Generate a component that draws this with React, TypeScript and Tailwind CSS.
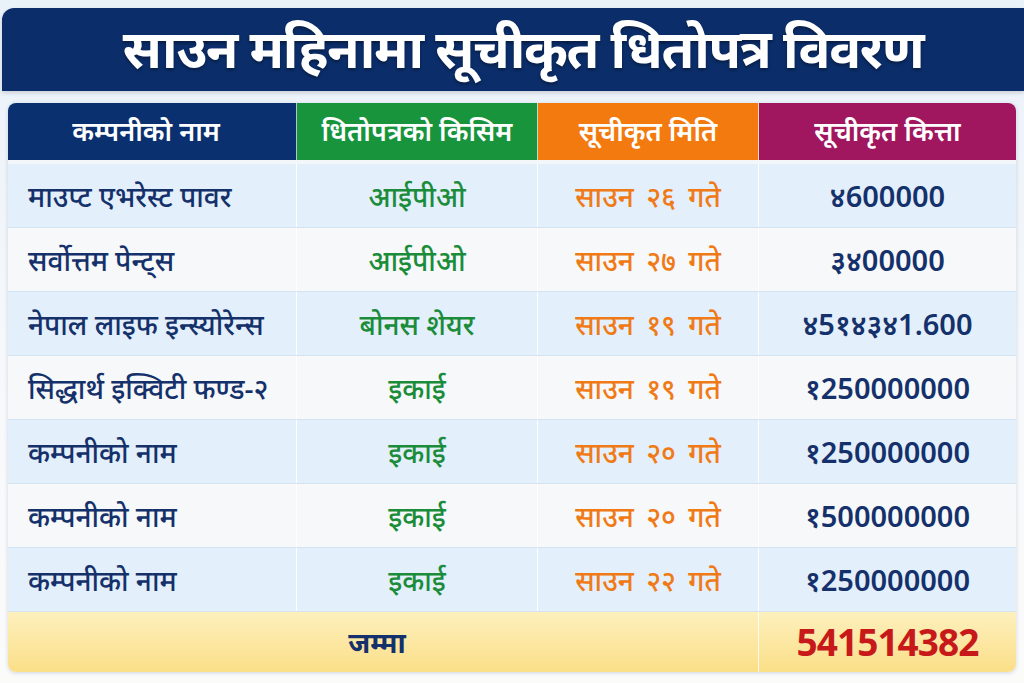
import React from 'react';

type Row = { name: string; kind: string; date: string; qty: string };

const rows: Row[] = [
  { name: 'माउप्ट एभरेस्ट पावर', kind: 'आईपीओ', date: 'साउन २६ गते', qty: '४600000' },
  { name: 'सर्वोत्तम पेन्ट्स', kind: 'आईपीओ', date: 'साउन २७ गते', qty: '३४00000' },
  { name: 'नेपाल लाइफ इन्स्योरेन्स', kind: 'बोनस शेयर', date: 'साउन १९ गते', qty: '४5१४३४1.600' },
  { name: 'सिद्धार्थ इक्विटी फण्ड-२', kind: 'इकाई', date: 'साउन १९ गते', qty: '१250000000' },
  { name: 'कम्पनीको नाम', kind: 'इकाई', date: 'साउन २० गते', qty: '१250000000' },
  { name: 'कम्पनीको नाम', kind: 'इकाई', date: 'साउन २० गते', qty: '१500000000' },
  { name: 'कम्पनीको नाम', kind: 'इकाई', date: 'साउन २२ गते', qty: '१250000000' },
];

const cols = 'grid grid-cols-[289px_241px_221px_257px]';

export default function App() {
  return (
    <div
      className="w-[1024px] h-[683px] overflow-hidden bg-gradient-to-b from-[#e9f1f9] via-[#f6f8fb] to-[#fbfbfa] flex flex-col"
      style={{ fontFamily: "'Noto Sans', 'Lohit Devanagari', 'FreeSans', sans-serif" }}
    >
      {/* शीर्षक */}
      <div className="mt-2 ml-[2px] h-[83px] rounded-tl-xl bg-[#0b2d69] flex items-center justify-center pb-1 pl-5 shadow-[0_2px_4px_rgba(0,0,0,0.15)]">
        <h1 className="text-white font-bold text-[53px] leading-none tracking-tight [text-shadow:0_2px_3px_rgba(0,0,0,0.35)]">
          साउन महिनामा सूचीकृत धितोपत्र विवरण
        </h1>
      </div>

      {/* तालिका */}
      <div className="mt-3 ml-2 w-[1008px] rounded-lg overflow-hidden shadow-[0_1px_4px_rgba(30,60,110,0.18)]">
        <div className={`${cols} h-[57px] text-white text-[27px] font-semibold`}>
          <div className="bg-[#0b3070] flex items-center justify-center border-r border-white/70 pr-3">कम्पनीको नाम</div>
          <div className="bg-[#17943c] flex items-center justify-center border-r border-white/70">धितोपत्रको किसिम</div>
          <div className="bg-[#f27a0f] flex items-center justify-center border-r border-white/70">सूचीकृत मिति</div>
          <div className="bg-[#a0175f] flex items-center justify-center">सूचीकृत कित्ता</div>
        </div>
        <div className="h-1 bg-[#f4f7fa]" />
        {rows.map((r, i) => (
          <div
            key={i}
            className={`${cols} h-[64px] border-b border-[#d3e3f2] ${i % 2 === 0 ? 'bg-[#e3effa]' : 'bg-[#f6f8f9]'}`}
          >
            <div className="flex items-center pl-[20px] text-[28px] text-[#15316b] font-medium border-r border-white">
              {r.name}
            </div>
            <div className="flex items-center justify-center text-[28px] text-[#1a8c3a] font-medium border-r border-white">
              {r.kind}
            </div>
            <div className="flex items-center justify-center text-[28px] text-[#f07a16] font-medium border-r border-white [word-spacing:5px]">
              {r.date}
            </div>
            <div className="flex items-center justify-center text-[29px] text-[#15316b] font-semibold">
              {r.qty}
            </div>
          </div>
        ))}
        <div className="grid grid-cols-[751px_257px] h-[60px] bg-gradient-to-b from-[#fdf0bc] to-[#fbdf88]">
          <div className="flex items-center justify-center text-[28px] font-bold text-[#15316b] border-r border-white/80 pr-[12px]">
            जम्मा
          </div>
          <div className="flex items-center justify-center text-[37px] font-bold text-[#c8191a] tracking-tight">
            541514382
          </div>
        </div>
      </div>
    </div>
  );
}
